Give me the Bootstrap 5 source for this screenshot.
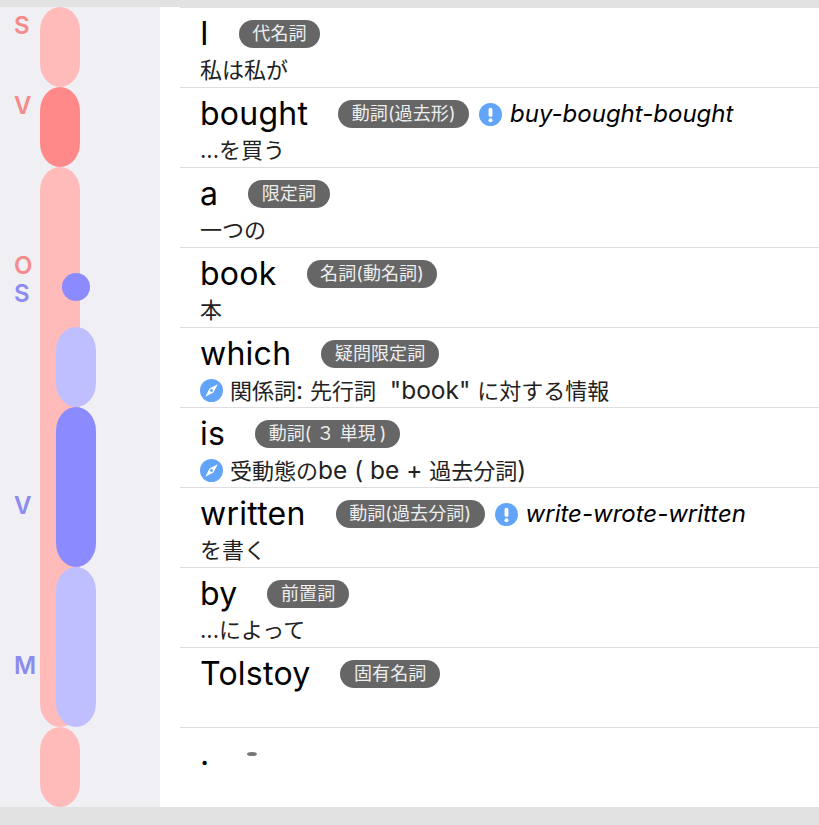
<!DOCTYPE html>
<html lang="ja">
<head>
<meta charset="utf-8">
<title>Sentence</title>
<link rel="stylesheet" href="https://cdn.jsdelivr.net/npm/bootstrap@5.3.0/dist/css/bootstrap.min.css">
<style>
html,body{height:825px;overflow:hidden}
body{background:#fff;color:#000;font-family:Inter,"Noto Sans CJK JP",sans-serif}
.edge-top{height:7px;background:#e2e2e2;flex:none}
.edge-bottom{height:18px;background:#e2e2e2;flex:none}
.stage{height:800px;flex:none}
.side{width:160px;flex:none;background:#efeff4;position:relative}
.pills{margin-left:40px;width:40px}
.seg{width:40px;border-radius:20px/24px;background:#ffbaba}
.seg.strong{background:#ff8888}
.h80{height:80px}.h560{height:560px}.h160{height:160px}
.overlay{position:absolute;left:56px;top:320px;width:40px}
.seg.b{background:#bfbfff}
.seg.b.strong{background:#8b8bff}
.dot{position:absolute;left:62px;top:266px;width:28px;height:28px;border-radius:50%;background:#8b8bff}
.tag{position:absolute;left:14px;font-size:24px;line-height:26px;font-weight:600;font-family:Inter,sans-serif}
.tag.r{color:#f58b8b}.tag.u{color:#8b8bf0}
.t1{top:6px}.t2{top:86px}.t3{top:246px}.t4{top:274px}.t5{top:486px}.t6{top:646px}
.rows{padding-left:20px;min-width:0;overflow:hidden}
.row-item{height:80px;border-bottom:1px solid #dedede;padding-left:20px;overflow:hidden}
.row-item.first{border-top:1px solid #e2e2e2;height:81px}
.row-item.last{border-bottom:0;height:79px}
.head{height:52px}
.word{font-size:32px;line-height:38px;white-space:nowrap;letter-spacing:.25px}
.pos{background:#666;color:#eee;border-radius:14px;height:28px;line-height:28px;font-size:18px;padding:0 13.5px;letter-spacing:.1px;white-space:nowrap}
.gap3{margin:0 5px}
.gapp{margin-left:4px}
.ms31{margin-left:30px}
.sub{font-size:22px;line-height:24px;color:#222;white-space:pre;display:flex;align-items:center;gap:7px;margin-top:-2px}
.lat{font-size:24.5px}
.forms{font-size:24px;font-style:italic;white-space:nowrap;margin-left:8px}
.ic{flex:none;width:23px;height:23px;display:block}
.ms10{margin-left:10px}
.specks{position:relative}
.speck{position:absolute;left:67px;top:24px;width:10px;height:4px;border-radius:50%;background:#777}
</style>
</head>
<body class="d-flex flex-column">
<div class="edge-top"></div>
<div class="stage d-flex">
  <div class="side">
    <div class="pills d-flex flex-column">
      <div class="seg h80"></div>
      <div class="seg strong h80"></div>
      <div class="seg h560"></div>
      <div class="seg h80"></div>
    </div>
    <div class="dot"></div>
    <div class="overlay d-flex flex-column">
      <div class="seg b h80"></div>
      <div class="seg b strong h160"></div>
      <div class="seg b h160"></div>
    </div>
    <span class="tag r t1">S</span>
    <span class="tag r t2">V</span>
    <span class="tag r t3">O</span>
    <span class="tag u t4">S</span>
    <span class="tag u t5">V</span>
    <span class="tag u t6">M</span>
  </div>
  <div class="rows flex-grow-1">
    <div class="row-item first">
      <div class="head d-flex align-items-center"><span class="word">I</span><span class="pos ms31">代名詞</span></div>
      <div class="sub">私は私が</div>
    </div>
    <div class="row-item">
      <div class="head d-flex align-items-center"><span class="word">bought</span><span class="pos ms31">動詞(過去形)</span>
        <svg class="ic ms10" viewBox="0 0 24 24"><circle cx="12" cy="12" r="12" fill="#62a4f8"/><rect x="10" y="5" width="4" height="9.5" rx="1.8" fill="#fff"/><circle cx="12" cy="18" r="2.1" fill="#fff"/></svg>
        <span class="forms">buy-bought-bought</span></div>
      <div class="sub">...を買う</div>
    </div>
    <div class="row-item">
      <div class="head d-flex align-items-center"><span class="word">a</span><span class="pos ms31">限定詞</span></div>
      <div class="sub">一つの</div>
    </div>
    <div class="row-item">
      <div class="head d-flex align-items-center"><span class="word">book</span><span class="pos ms31">名詞(動名詞)</span></div>
      <div class="sub">本</div>
    </div>
    <div class="row-item">
      <div class="head d-flex align-items-center"><span class="word">which</span><span class="pos ms31">疑問限定詞</span></div>
      <div class="sub"><svg class="ic" viewBox="0 0 24 24"><circle cx="12" cy="12" r="12" fill="#62a4f8"/><path d="M18.5 5.5 14 14 5.500 18.500 10 10Z" fill="#fff"/><circle cx="12" cy="12" r="1.500" fill="#62a4f8"/></svg><span>関係詞<span class="lat">: </span>先行詞<span class="lat">  "book" </span>に対する情報</span></div>
    </div>
    <div class="row-item">
      <div class="head d-flex align-items-center"><span class="word">is</span><span class="pos ms31">動詞(<span class="gap3">３</span>単現<span class="gapp">)</span></span></div>
      <div class="sub"><svg class="ic" viewBox="0 0 24 24"><circle cx="12" cy="12" r="12" fill="#62a4f8"/><path d="M18.5 5.5 14 14 5.500 18.500 10 10Z" fill="#fff"/><circle cx="12" cy="12" r="1.500" fill="#62a4f8"/></svg><span>受動態の<span class="lat">be ( be + </span>過去分詞<span class="lat">)</span></span></div>
    </div>
    <div class="row-item">
      <div class="head d-flex align-items-center"><span class="word">written</span><span class="pos ms31">動詞(過去分詞)</span>
        <svg class="ic ms10" viewBox="0 0 24 24"><circle cx="12" cy="12" r="12" fill="#62a4f8"/><rect x="10" y="5" width="4" height="9.5" rx="1.8" fill="#fff"/><circle cx="12" cy="18" r="2.1" fill="#fff"/></svg>
        <span class="forms">write-wrote-written</span></div>
      <div class="sub">を書く</div>
    </div>
    <div class="row-item">
      <div class="head d-flex align-items-center"><span class="word">by</span><span class="pos ms31">前置詞</span></div>
      <div class="sub">...によって</div>
    </div>
    <div class="row-item">
      <div class="head d-flex align-items-center"><span class="word">Tolstoy</span><span class="pos ms31">固有名詞</span></div>
      <div class="sub"></div>
    </div>
    <div class="row-item last specks">
      <div class="head d-flex align-items-center"><span class="word">.</span></div>
      <span class="speck"></span>
    </div>
  </div>
</div>
<div class="edge-bottom"></div>
</body>
</html>
